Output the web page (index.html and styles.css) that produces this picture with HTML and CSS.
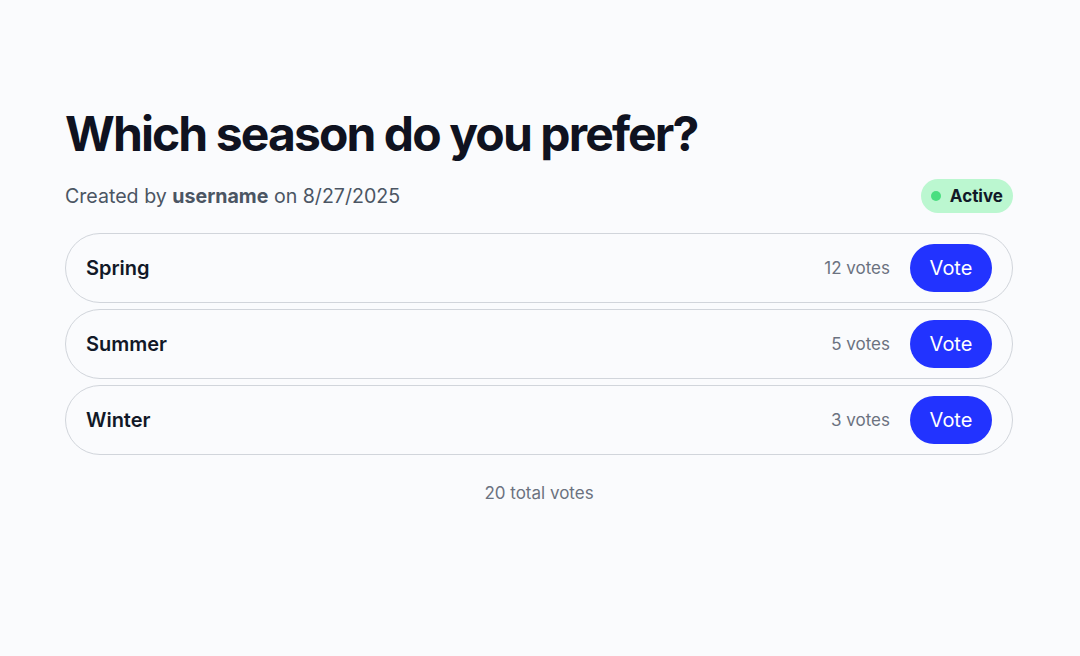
FILE: index.html
```html
<!DOCTYPE html>
<html>
<head>
<meta charset="utf-8">
<link rel="stylesheet" href="styles.css">
</head>
<body>
<main class="poll">
  <h1 class="title">Which season do you prefer?</h1>
  <div class="meta">
    <p class="created">Created by <strong>username</strong> on 8/27/2025</p>
    <span class="badge"><span class="dot"></span>Active</span>
  </div>
  <ul class="options">
    <li class="option"><span class="label">Spring</span><span class="right"><span class="votes">12 votes</span><button class="vote">Vote</button></span></li>
    <li class="option"><span class="label">Summer</span><span class="right"><span class="votes">5 votes</span><button class="vote">Vote</button></span></li>
    <li class="option"><span class="label">Winter</span><span class="right"><span class="votes">3 votes</span><button class="vote">Vote</button></span></li>
  </ul>
  <p class="total">20 total votes</p>
</main>
</body>
</html>
```
FILE: styles.css
```css
* { box-sizing: border-box; }
html, body { margin: 0; background: #fafbfd; }
body { font-family: Inter, "Noto Sans", sans-serif; color: #111827; }
.poll { width: 948px; margin: 0 0 0 65px; padding-top: 104px; }
.title { margin: 0; font-size: 48px; line-height: 60px; font-weight: 700; color: #0f1220; letter-spacing: -1.9px; }
.meta { display: flex; justify-content: space-between; align-items: center; margin-top: 15px; }
.created { margin: 0; font-size: 19.6px; color: #4b5563; }
.created strong { font-weight: 700; color: #4b5563; }
.badge { display: inline-flex; align-items: center; gap: 9px; height: 34px; padding: 0 10px 0 10px; border-radius: 17px; background: #bbf7d0; font-size: 17px; font-weight: 700; color: #111827; }
.dot { width: 10px; height: 10px; border-radius: 50%; background: #4ade80; }
.options { list-style: none; margin: 20px 0 0; padding: 0; display: flex; flex-direction: column; gap: 6px; }
.option { display: flex; justify-content: space-between; align-items: center; height: 70px; padding: 0 20px; border: 1px solid #d1d5db; border-radius: 35px; }
.label { font-size: 20px; font-weight: 600; color: #111827; }
.right { display: flex; align-items: center; gap: 20px; }
.votes { font-size: 17px; color: #6b7280; }
.vote { height: 48px; width: 82px; border: 0; border-radius: 24px; background: #2233ff; color: #fff; font-family: inherit; font-size: 20px; cursor: pointer; }
.total { margin: 28px 0 0; text-align: center; font-size: 17px; color: #6b7280; }
```
